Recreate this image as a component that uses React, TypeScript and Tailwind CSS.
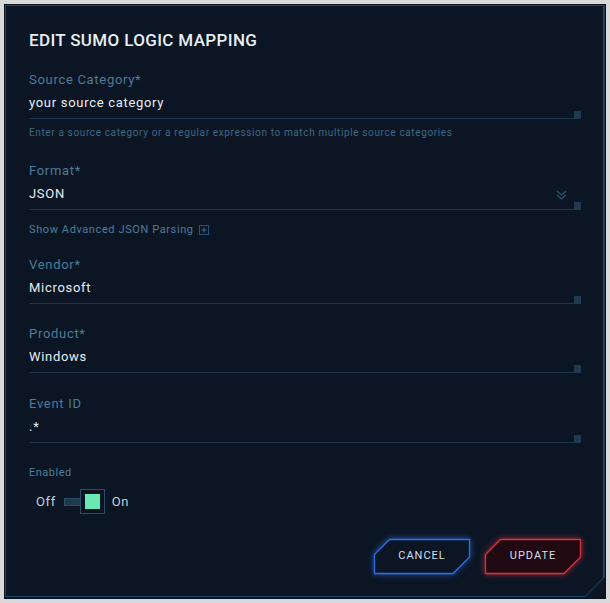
import React from "react";

const font = { fontFamily: "Roboto, 'DejaVu Sans', sans-serif" };

function Field({ label, value, mt, right }: { label: string; value: string; mt: string; right?: React.ReactNode }) {
  return (
    <div className={`flex flex-col ${mt}`}>
      <div className="text-[13px] leading-[17px] tracking-[0.7px] text-[#4c7d9b]">{label}</div>
      <div className="relative mt-[6px] border-b border-[#1d3649] pb-[7px]">
        <div className="text-[13px] leading-[17px] tracking-[0.7px] text-[#e6edf4]">{value}</div>
        {right}
        <div className="absolute right-0 bottom-[-1px] h-[8px] w-[7px] bg-[#1d3a50]" />
      </div>
    </div>
  );
}

function Chevrons() {
  return (
    <svg className="absolute right-[14px] top-[5px]" width="11" height="11" viewBox="0 0 11 11" fill="none">
      <path d="M1 1 L5.5 5 L10 1" stroke="#2a5470" strokeWidth="1.3" />
      <path d="M1 5 L5.5 9 L10 5" stroke="#2a5470" strokeWidth="1.3" />
    </svg>
  );
}

function CutButton({ label, stroke, fill, glow }: { label: string; stroke: string; fill: string; glow: string }) {
  return (
    <div className="relative flex h-[35px] w-[96px] items-center justify-center">
      <svg className="absolute inset-0 overflow-visible" width="96" height="35" viewBox="0 0 96 35" style={{ filter: `drop-shadow(0 0 3px ${glow})` }}>
        <polygon points="15.5,0.5 95.5,0.5 95.5,18 79,34.5 0.5,34.5 0.5,15.5" fill={fill} stroke={stroke} strokeWidth="1.3" />
      </svg>
      <span className="relative text-[11px] tracking-[1px] text-[#d6dde6]">{label}</span>
    </div>
  );
}

export default function App() {
  return (
    <div className="h-[603px] w-[610px] bg-[#d9d9d9] p-[4px]" style={font}>
      <div className="relative h-[595px] w-[602px] border border-[#0a1220] bg-[#0b1523]">
        <svg className="pointer-events-none absolute left-[-1px] top-[-1px]" width="602" height="595" viewBox="0 0 602 595" fill="none">
          <polyline points="1.5,1.5 599.5,1.5 599.5,574 581,592.5 1.5,592.5 1.5,1.5" stroke="#22496a" strokeWidth="1" />
          <line x1="600.5" y1="1" x2="600.5" y2="574" stroke="#1c3e5c" strokeWidth="1" />
        </svg>
        <div className="relative flex flex-col px-[24px] pt-[24px]">
          <div className="text-[17px] font-medium leading-[22px] tracking-[0.35px] text-[#e8eef5]">EDIT SUMO LOGIC MAPPING</div>
          <Field label="Source Category*" value="your source category" mt="mt-[20px]" />
          <div className="mt-[7px] text-[10px] leading-[13px] tracking-[0.63px] text-[#3d6a86]">
            Enter a source category or a regular expression to match multiple source categories
          </div>
          <Field label="Format*" value="JSON" mt="mt-[23px]" right={<Chevrons />} />
          <div className="mt-[13px] flex items-center gap-[5px] text-[11px] leading-[14px] tracking-[0.6px] text-[#4c7d9b]">
            <span>Show Advanced JSON Parsing</span>
            <svg width="10" height="10" viewBox="0 0 10 10" fill="none">
              <rect x="0.5" y="0.5" width="9" height="9" stroke="#2a5470" />
              <path d="M5 2.5 V7.5 M2.5 5 H7.5" stroke="#3d6a86" />
            </svg>
          </div>
          <Field label="Vendor*" value="Microsoft" mt="mt-[19px]" />
          <Field label="Product*" value="Windows" mt="mt-[21px]" />
          <Field label="Event ID" value=".*" mt="mt-[22px]" />
          <div className="mt-[23px] text-[11px] leading-[14px] tracking-[0.5px] text-[#4c7d9b]">Enabled</div>
          <div className="mt-[9px] flex items-center pl-[7px]">
            <span className="text-[13px] leading-[17px] tracking-[0.6px] text-[#c5d0db]">Off</span>
            <div className="ml-[8px] h-[8px] w-[18px] border border-[#2a4e66] bg-[#1d3a4d]" />
            <div className="ml-[-2px] flex h-[25px] w-[25px] items-center justify-center border border-[#2a4e66] bg-[#0a1420]">
              <div className="h-[15px] w-[15px] bg-[#68e8b2]" />
            </div>
            <span className="ml-[7px] text-[13px] leading-[17px] tracking-[0.6px] text-[#c5d0db]">On</span>
          </div>
          <div className="mt-[25px] flex justify-end gap-[15px]">
            <CutButton label="CANCEL" stroke="#2f6fe6" fill="#0b1523" glow="rgba(47,111,230,0.7)" />
            <CutButton label="UPDATE" stroke="#d8303e" fill="#200910" glow="rgba(216,48,62,0.7)" />
          </div>
        </div>
      </div>
    </div>
  );
}
